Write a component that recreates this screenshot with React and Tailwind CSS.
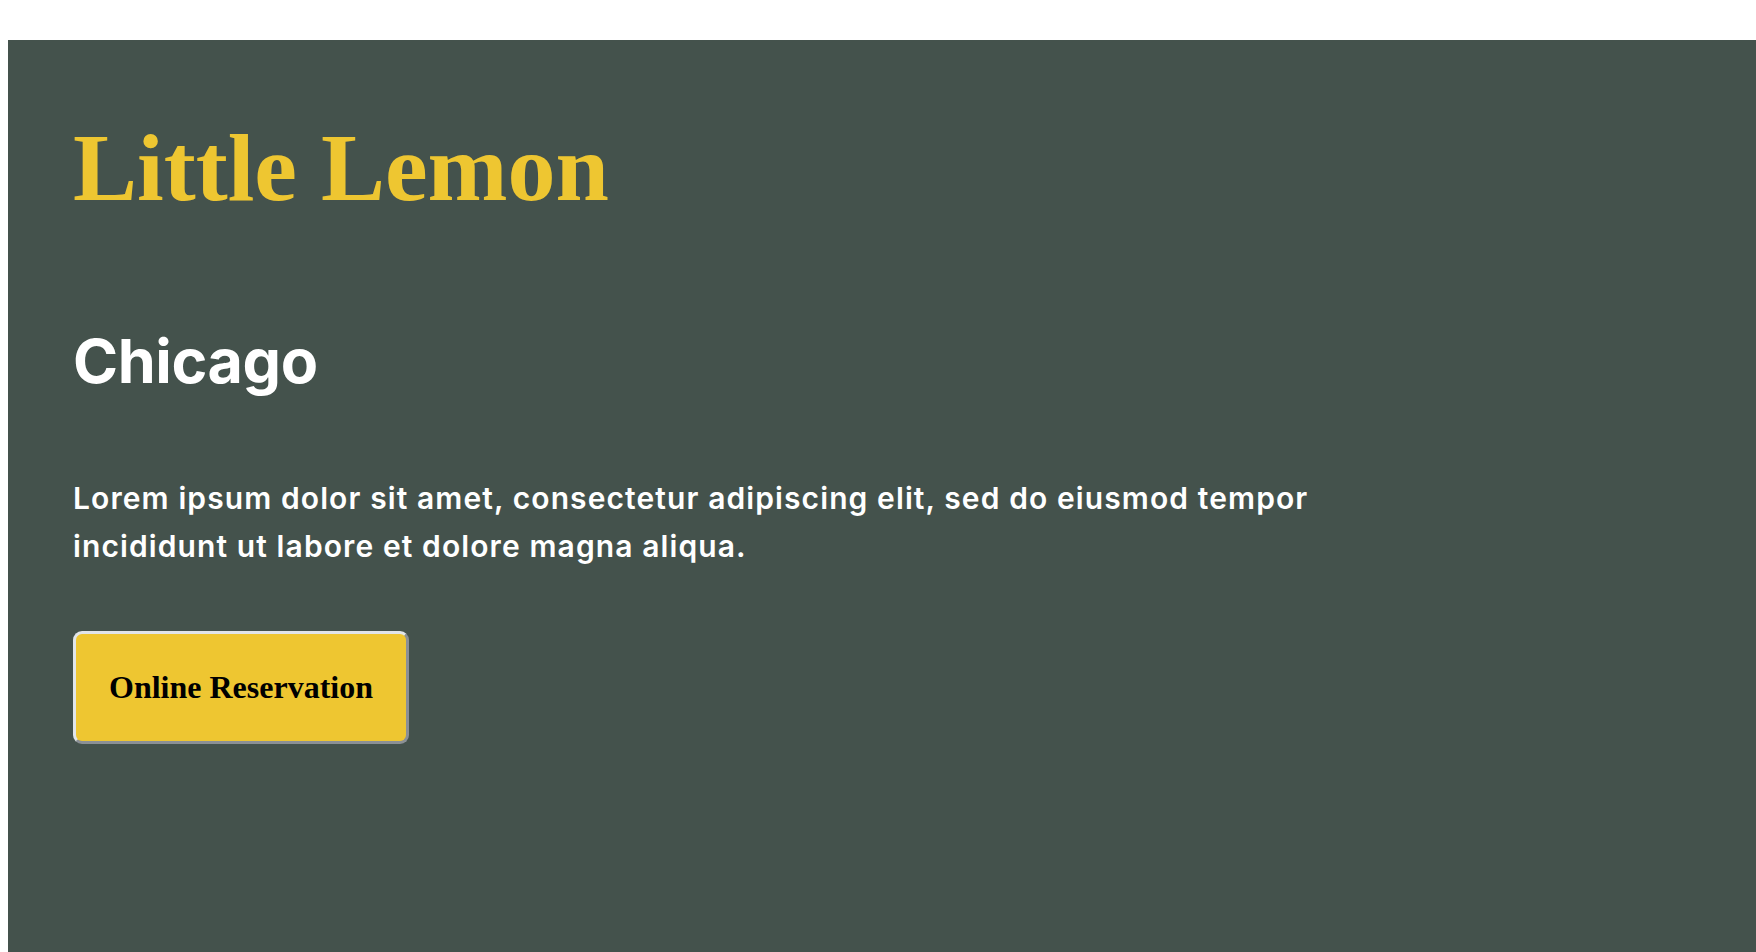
import React from 'react';

const App = () => {
  return (
    <div className="min-h-screen bg-white pt-[40px] pl-[8px]">
      <section className="min-h-[912px] bg-[#44524c] pl-[65px] pt-[80px] pb-[120px]">
        <h1 className="font-['Liberation_Serif',serif] text-[96px] leading-[96px] font-bold text-[#eec631]">
          Little Lemon
        </h1>
        <h2 className="mt-[114px] font-['Inter',sans-serif] text-[61px] leading-[62px] font-bold tracking-[-0.4px] text-white">
          Chicago
        </h2>
        <p className="mt-[82px] max-w-[1330px] font-['Inter',sans-serif] text-[30px] leading-[48px] font-semibold tracking-[1.1px] text-white">
          Lorem ipsum dolor sit amet, consectetur adipiscing elit, sed do eiusmod tempor incididunt ut labore et dolore magna aliqua.
        </p>
        <button className="mt-[61px] rounded-[9px] border-[3px] border-t-[#e1e5e9] border-l-[#e1e5e9] border-b-[#8b9095] border-r-[#8b9095] bg-[#eec631] px-[33px] py-[35px] font-['Liberation_Serif',serif] text-[32px] leading-[37px] font-bold text-black">
          Online Reservation
        </button>
      </section>
    </div>
  );
};

export default App;
